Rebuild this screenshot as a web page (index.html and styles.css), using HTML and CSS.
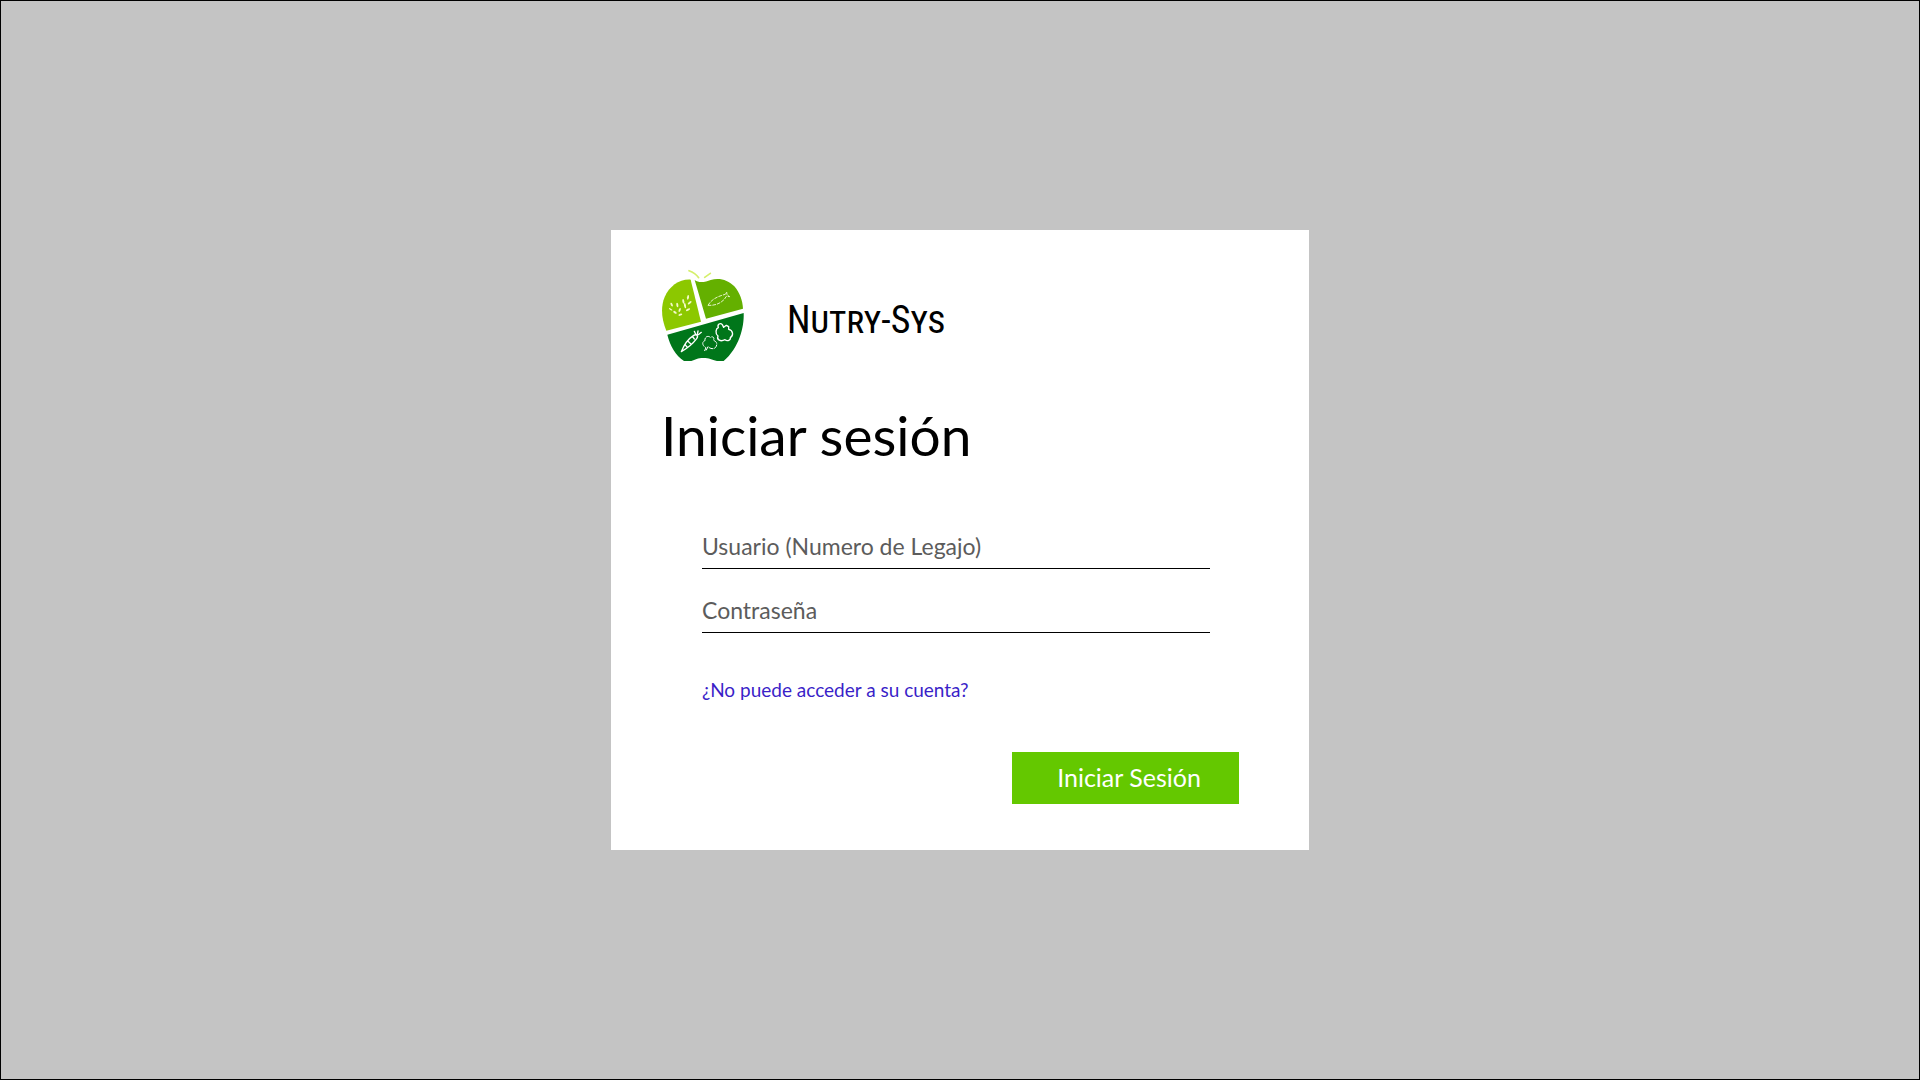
FILE: index.html
```html
<!DOCTYPE html>
<html lang="es">
<head>
<meta charset="utf-8">
<meta name="viewport" content="width=device-width, initial-scale=1">
<title>Nutry-Sys - Iniciar sesión</title>
<link rel="stylesheet" href="styles.css">
</head>
<body>
<main class="page">
  <section class="card">
    <header class="brand">
      <svg class="brand-logo" viewBox="33 21 252 282" aria-hidden="true">
        <g fill="none" stroke="#d5ef6a" stroke-width="5" stroke-linecap="round">
          <path d="M117 29Q136 36 146 50"/>
          <path d="M164 49L181 37"/>
        </g>
        <path fill="#8cc800" d="M49 209C35 176 31 139 44 108C58 76 88 54 122 56L153 182Z"/>
        <path fill="#64b000" d="M134 57C148 68 168 62 182 57C207 49 234 56 253 76C270 96 278 120 279 143L168 173Z"/>
        <path fill="#00761a" d="M52 221L281 156C283 200 266 262 221 300H201C185 296 178 291 160 291C143 291 136 296 124 300H102C77 284 60 254 52 221Z"/>
        <g fill="#f4f8c8">
          <ellipse cx="65" cy="131" rx="3" ry="6" transform="rotate(-25 65 131)"/>
          <ellipse cx="82" cy="132" rx="3" ry="7" transform="rotate(-10 82 132)"/>
          <ellipse cx="62" cy="145" rx="2" ry="6" transform="rotate(-60 62 145)"/>
          <ellipse cx="75" cy="154" rx="3" ry="6" transform="rotate(-55 75 154)"/>
          <ellipse cx="89" cy="147" rx="3" ry="6" transform="rotate(20 89 147)"/>
          <ellipse cx="91" cy="161" rx="3" ry="6" transform="rotate(70 91 161)"/>
          <ellipse cx="100" cy="121" rx="3" ry="7" transform="rotate(-10 100 121)"/>
          <ellipse cx="114" cy="109" rx="3" ry="7" transform="rotate(10 114 109)"/>
          <ellipse cx="105" cy="134" rx="3" ry="8" transform="rotate(-10 105 134)"/>
          <ellipse cx="119" cy="125" rx="3" ry="7" transform="rotate(50 119 125)"/>
          <ellipse cx="114" cy="146" rx="3" ry="7" transform="rotate(60 114 146)"/>
        </g>
        <g fill="none" stroke="#e6f5c8" stroke-width="3" stroke-linejoin="round">
          <path stroke-dasharray="11 3" d="M174 133C184 115 203 106 226 100L230 93L231 101L239 107L229 106C221 122 200 135 174 133"/>
        </g>
        <g fill="none" stroke="#fff" stroke-width="4" stroke-linejoin="round" stroke-linecap="round">
          <path d="M94 272C102 252 116 233 130 224C140 217 146 225 140 233C128 249 112 262 94 272M114 241L122 248M106 252L112 259M128 227L133 234M137 220L133 211M142 220L144 210M145 221L154 214"/>
          <path stroke-width="3" stroke-dasharray="12 5" d="M164 269L168 260C156 255 155 241 165 239C163 228 174 222 181 229C189 224 195 231 190 238C202 241 203 252 196 260C189 266 179 262 174 257L169 267"/>
          <path d="M204 225C194 217 198 202 205 200C201 190 211 184 217 191L221 199L229 193L236 197L236 205C250 208 251 224 241 230C243 237 232 242 225 236C212 243 199 237 204 225Z"/>
        </g>
      </svg>
      <span class="brand-name">Nutry-Sys</span>
    </header>
    <h1 class="title">Iniciar sesión</h1>
    <form class="form">
      <input class="field" type="text" name="usuario" aria-label="Usuario (Numero de Legajo)" placeholder="Usuario (Numero de Legajo)">
      <input class="field" type="password" name="contrasena" aria-label="Contraseña" placeholder="Contraseña">
      <a class="help" href="#">¿No puede acceder a su cuenta?</a>
      <button class="submit" type="submit">Iniciar Sesión</button>
    </form>
  </section>
</main>
</body>
</html>
```
FILE: styles.css
```css
* {
  box-sizing: border-box;
}

body {
  margin: 0;
  font-family: Lato, "Open Sans", sans-serif;
}

.page {
  display: flex;
  align-items: center;
  justify-content: center;
  min-height: 100vh;
  border: 1px solid #000;
  background: #c4c4c4;
}

.card {
  width: 100%;
  max-width: 698px;
  padding: 38px 70px 46px 50px;
  background: #fff;
}

.brand {
  display: flex;
  align-items: center;
  gap: 42px;
}

.brand-logo {
  width: 84px;
  height: 94px;
}

.brand-name {
  padding-top: 10px;
  font-family: "Roboto Condensed", "Liberation Sans Narrow", sans-serif;
  font-size: 38px;
  line-height: 48px;
  font-variant: small-caps;
}

.title {
  margin: 36px 0 56px;
  font-size: 55px;
  font-weight: 400;
  line-height: 74px;
}

.form {
  display: flex;
  flex-direction: column;
  gap: 23px;
  padding-left: 41px;
}

.field {
  height: 41px;
  margin-right: 29px;
  padding: 0 0 4px;
  border: 0;
  border-bottom: 1px solid #000;
  border-radius: 0;
  background: none;
  color: #000;
  font: inherit;
  font-size: 23px;
}

.field::placeholder {
  color: #5c5c5c;
  opacity: 1;
}

.field:focus {
  outline: none;
  border-bottom-color: #64c800;
}

.help {
  align-self: flex-start;
  margin: 20px 0 25px;
  color: #3a1fc8;
  font-size: 19px;
  line-height: 28px;
  text-decoration: none;
}

.submit {
  align-self: flex-end;
  width: 227px;
  height: 52px;
  padding: 0 0 2px 7px;
  border: 0;
  background: #64c800;
  color: #fff;
  font: inherit;
  font-size: 25px;
}
```
